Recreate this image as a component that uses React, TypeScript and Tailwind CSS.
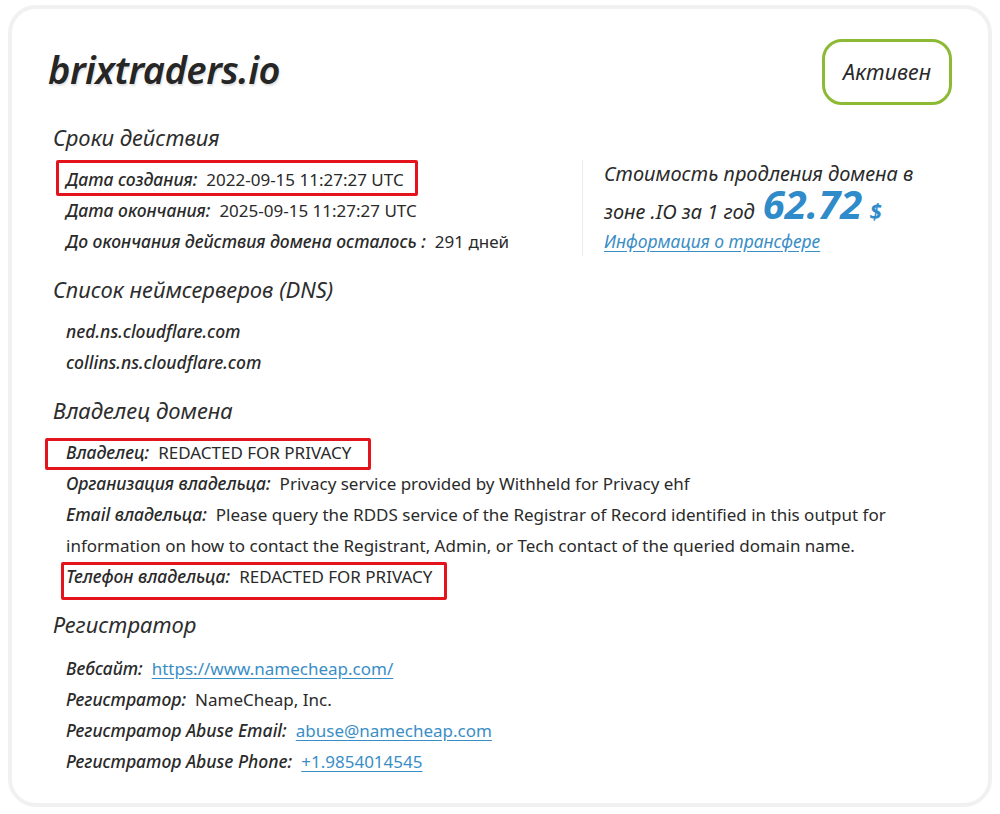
import React from "react";

const font = { fontFamily: '"Noto Sans", "DejaVu Sans", sans-serif' };

type Row = { label: string; value: React.ReactNode; mark?: "a" | "b" | "c" };

const Field = ({ label, value }: { label: string; value: React.ReactNode }) => (
  <>
    <span className="align-top text-[17.5px] font-medium italic text-[#2a2a2a]">{label}:</span>
    <span className="ml-[9px] align-top text-[17px] text-[#2a2a2a]">{value}</span>
  </>
);

const Link = ({ children }: { children: React.ReactNode }) => (
  <a href="#" className="text-[#3a8ec6] underline underline-offset-[3px]">
    {children}
  </a>
);

const Heading = ({ children, className = "" }: { children: React.ReactNode; className?: string }) => (
  <h2 className={`ml-[5px] text-[22px] leading-[36px] italic text-[#2d2d2d] ${className}`}>{children}</h2>
);

// red annotation frames drawn over some rows
const marks = {
  a: "-left-[10px] top-[-4px] h-[36px] w-[362px]",
  b: "-left-[21px] top-[1px] h-[32px] w-[326px]",
  c: "-left-[5px] top-[1px] h-[38px] w-[386px]",
};

const RowItem = ({ row }: { row: Row }) => (
  <div className="relative text-[17px] leading-[31px]">
    <Field label={row.label} value={row.value} />
    {row.mark && (
      <div
        className={`pointer-events-none absolute rounded-[2px] border-[3px] border-[#e3141b] ${marks[row.mark]}`}
      />
    )}
  </div>
);

export default function App() {
  return (
    <div className="min-h-[814px] bg-white px-[8px] py-[5px]" style={font}>
      <div className="rounded-[28px] border-[4px] border-[#f1f1f1] bg-white pb-[26px] pl-[36px] pr-[36px] pt-[30px]">
        <div className="flex items-center justify-between">
          <h1
            className="mt-[-6px] text-[38px] font-semibold italic leading-[48px] tracking-[-0.5px] text-[#262626]"
            style={{ textShadow: "1px 2px 2px rgba(0,0,0,0.12)" }}
          >
            brixtraders.io
          </h1>
          <div className="flex h-[66px] w-[130px] items-center justify-center rounded-[20px] border-[3px] border-[#8dba35] text-[21.5px] italic text-[#2a2a2a]">
            Активен
          </div>
        </div>

        <Heading className="mt-[14px]">Сроки действия</Heading>
        <div className="mt-[9px] flex">
          <div className="w-[534px] pl-[18px]">
            <RowItem row={{ label: "Дата создания", value: "2022-09-15 11:27:27 UTC", mark: "a" }} />
            <RowItem row={{ label: "Дата окончания", value: "2025-09-15 11:27:27 UTC" }} />
            <RowItem row={{ label: "До окончания действия домена осталось ", value: "291 дней" }} />
          </div>
          <div className="mt-[-4px] h-[96px] border-l border-[#ececec] pl-[21px]">
            <div className="-mt-[1px] h-[30px] text-[20px] italic leading-[30px] text-[#2a2a2a]">
              Стоимость продления домена в
            </div>
            <div className="flex h-[33px] items-baseline text-[20px] italic leading-[30px] text-[#2a2a2a]">
              <span>зоне .IO за 1 год</span>
              <span className="ml-[8px] text-[40px] font-bold leading-[30px] text-[#2f8bc9]">62.72</span>
              <span className="ml-[7px] text-[22px] font-bold leading-[30px] text-[#2f8bc9]">$</span>
            </div>
            <a
              href="#"
              className="mt-[5px] block text-[17.5px] italic leading-[28px] text-[#3a8ec6] underline underline-offset-[3px]"
            >
              Информация о трансфере
            </a>
          </div>
        </div>

        <Heading className="mt-[14px]">Список неймсерверов (DNS)</Heading>
        <div className="mt-[9px] pl-[18px] text-[17.5px] font-medium italic leading-[31px] text-[#2a2a2a]">
          <div>ned.ns.cloudflare.com</div>
          <div>collins.ns.cloudflare.com</div>
        </div>

        <Heading className="mt-[14px]">Владелец домена</Heading>
        <div className="mt-[9px] pl-[18px]">
          <div className="w-[830px]">
            <RowItem row={{ label: "Владелец", value: "REDACTED FOR PRIVACY", mark: "b" }} />
            <RowItem row={{ label: "Организация владельца", value: "Privacy service provided by Withheld for Privacy ehf" }} />
            <RowItem
              row={{
                label: "Email владельца",
                value:
                  "Please query the RDDS service of the Registrar of Record identified in this output for information on how to contact the Registrant, Admin, or Tech contact of the queried domain name.",
              }}
            />
            <RowItem row={{ label: "Телефон владельца", value: "REDACTED FOR PRIVACY", mark: "c" }} />
          </div>
        </div>

        <Heading className="mt-[14px]">Регистратор</Heading>
        <div className="mt-[11px] pl-[18px]">
          <RowItem row={{ label: "Вебсайт", value: <Link>https://www.namecheap.com/</Link> }} />
          <RowItem row={{ label: "Регистратор", value: "NameCheap, Inc." }} />
          <RowItem row={{ label: "Регистратор Abuse Email", value: <Link>abuse@namecheap.com</Link> }} />
          <RowItem row={{ label: "Регистратор Abuse Phone", value: <Link>+1.9854014545</Link> }} />
        </div>
      </div>
    </div>
  );
}
